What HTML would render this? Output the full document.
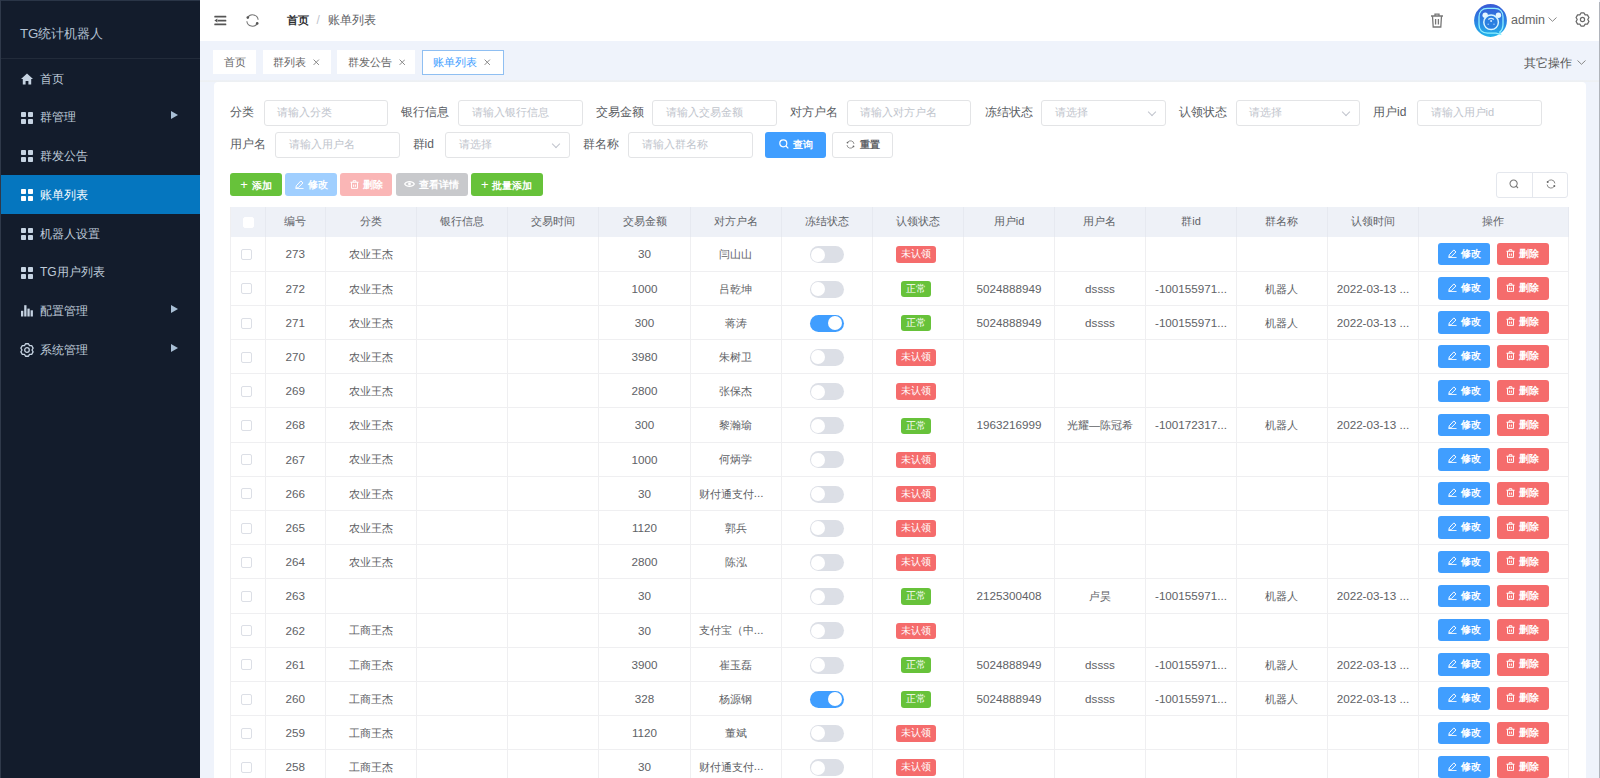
<!DOCTYPE html>
<html><head><meta charset="utf-8">
<style>
*{box-sizing:border-box;margin:0;padding:0}
html,body{width:1600px;height:778px;overflow:hidden}
body{position:relative;background:#eff3fb;font-family:"Liberation Sans",sans-serif;color:#606266;font-size:11.67px}
.abs{position:absolute}
/* sidebar */
#side{position:absolute;left:0;top:0;width:199.6px;height:778px;background:#131c2c}
#logo{position:absolute;left:20px;top:24.5px;font-size:13.3px;color:#b4c2d3;white-space:nowrap;line-height:18px}
#sep{position:absolute;left:0;top:58px;width:200px;height:1px;background:#222b3a}
.mi{position:absolute;left:0;width:200px;height:38.75px;color:#bfcbd9;font-size:12px;line-height:41.5px;font-weight:500}
.mi .ic{position:absolute;left:21px;top:14.2px;width:12px;height:12px}
.mi .tx{position:absolute;left:40px;top:0}
.mi .ar{position:absolute;left:171px;top:13.6px;width:0;height:0;border-top:4.5px solid transparent;border-bottom:4.5px solid transparent;border-left:7.5px solid #a9bfd6}
.mi.act{background:#0576bf;color:#fff}
/* header */
#hdr{position:absolute;left:200px;top:0;width:1399px;height:41.2px;background:#fff}
#rline{position:absolute;left:1599px;top:2px;width:1px;height:776px;background:#b0b4bb}
/* tabs */
.tab{position:absolute;top:50px;height:24px;background:#fff;font-size:11px;line-height:24px;color:#666;white-space:nowrap}
.tab .x{margin-left:7px;margin-top:-1px}
.tab.act{border:1px solid #8fbff2;color:#409eff;line-height:23px;top:49.6px;height:25px}
/* card */
#card{position:absolute;left:213.5px;top:82.3px;width:1372.5px;height:720px;background:#fff;border-radius:4px}
.lbl{position:absolute;font-weight:500;color:#5a5d63;font-size:12px;line-height:13px;white-space:nowrap}
.inp{position:absolute;height:26px;width:124.5px;border:1px solid #e3e4e6;border-radius:3px;font-size:11px;color:#c0c4cc;line-height:23px;padding-left:12.5px;white-space:nowrap;background:#fff}
.inp .chev{position:absolute;right:10px;top:8px;width:6px;height:6px;border-right:1px solid #c0c4cc;border-bottom:1px solid #c0c4cc;transform:rotate(45deg)}
.btn{position:absolute;height:23px;border-radius:3px;color:#fff;font-size:10px;line-height:23px;text-align:center;white-space:nowrap;font-weight:bold}
/* table */
#tbl{position:absolute;left:230px;top:207px;width:1338px;border-collapse:collapse;table-layout:fixed}
#tbl th{height:30px;background:#eef1f7;color:#5f6368;font-weight:500;font-size:11px;border-right:1px solid #e6e9f0;text-align:center;padding:0 0 1.5px 0}
#tbl td{height:34.2px;border-bottom:1px solid #efeff1;border-right:1px solid #efeff1;text-align:center;padding:1.5px 0 0 0;font-size:11px;color:#606266;white-space:nowrap;overflow:hidden}
.L{font-size:11.67px;position:relative;top:-0.8px}
#tbl td.l{text-align:left;padding-left:8px;text-overflow:ellipsis}
#tbl td:first-child,#tbl th:first-child{border-left:1px solid #efeff1}
.cb{display:inline-block;width:11px;height:11px;border:1px solid #dcdfe6;border-radius:2px;background:#fff;vertical-align:middle;position:relative;left:-2px;top:-1px}
.sw{display:inline-block;position:relative;width:34px;height:17px;border-radius:9px;background:#dcdfe6;vertical-align:middle}
.sw:after{content:"";position:absolute;left:1.5px;top:1.5px;width:14px;height:14px;border-radius:50%;background:#fff}
.sw.on{background:#409eff}
.sw.on:after{left:18.5px}
.tag{display:inline-block;height:16.5px;line-height:16.5px;border-radius:3px;color:#fff;font-size:10px;padding:0 5px;vertical-align:middle;position:relative;left:-1.5px;font-weight:500}
.tg-r{background:#f56c6c}
.tg-g{background:#67c23a}
.ab{display:inline-block;width:52px;height:22.5px;line-height:22.5px;border-radius:3px;color:#fff;font-size:10px;font-weight:bold;vertical-align:middle;position:relative;top:-0.7px}
.ab.e{background:#409eff}
.ab.d{background:#f56c6c;margin-left:6.5px}
svg{display:inline-block;vertical-align:middle}
.ei{margin-right:4px;margin-top:-2px}
</style></head><body>
<div id="side">
  <div id="logo">TG统计机器人</div>
  <div id="sep"></div>
  <div class="mi" style="top:58.70px"><svg class="ic" viewBox="0 0 12 12"><path d="M6 0.5 L0 6 H1.8 V11.5 H4.6 V8 H7.4 V11.5 H10.2 V6 H12 Z" fill="#c6d3e2"/></svg><span class="tx">首页</span></div>
  <div class="mi" style="top:97.45px"><svg class="ic" viewBox="0 0 12 12"><rect x="0" y="0" width="5" height="5" rx="0.8" fill="#c6d3e2"/><rect x="7" y="0" width="5" height="5" rx="0.8" fill="#c6d3e2"/><rect x="0" y="7" width="5" height="5" rx="0.8" fill="#c6d3e2"/><rect x="7" y="7" width="5" height="5" rx="0.8" fill="#c6d3e2"/></svg><span class="tx">群管理</span><span class="ar"></span></div>
  <div class="mi" style="top:136.20px"><svg class="ic" viewBox="0 0 12 12"><rect x="0" y="0" width="5" height="5" rx="0.8" fill="#c6d3e2"/><rect x="7" y="0" width="5" height="5" rx="0.8" fill="#c6d3e2"/><rect x="0" y="7" width="5" height="5" rx="0.8" fill="#c6d3e2"/><rect x="7" y="7" width="5" height="5" rx="0.8" fill="#c6d3e2"/></svg><span class="tx">群发公告</span></div>
  <div class="mi act" style="top:174.95px"><svg class="ic" viewBox="0 0 12 12"><rect x="0" y="0" width="5" height="5" rx="0.8" fill="#fff"/><rect x="7" y="0" width="5" height="5" rx="0.8" fill="#fff"/><rect x="0" y="7" width="5" height="5" rx="0.8" fill="#fff"/><rect x="7" y="7" width="5" height="5" rx="0.8" fill="#fff"/></svg><span class="tx">账单列表</span></div>
  <div class="mi" style="top:213.70px"><svg class="ic" viewBox="0 0 12 12"><rect x="0" y="0" width="5" height="5" rx="0.8" fill="#c6d3e2"/><rect x="7" y="0" width="5" height="5" rx="0.8" fill="#c6d3e2"/><rect x="0" y="7" width="5" height="5" rx="0.8" fill="#c6d3e2"/><rect x="7" y="7" width="5" height="5" rx="0.8" fill="#c6d3e2"/></svg><span class="tx">机器人设置</span></div>
  <div class="mi" style="top:252.45px"><svg class="ic" viewBox="0 0 12 12"><rect x="0" y="0" width="5" height="5" rx="0.8" fill="#c6d3e2"/><rect x="7" y="0" width="5" height="5" rx="0.8" fill="#c6d3e2"/><rect x="0" y="7" width="5" height="5" rx="0.8" fill="#c6d3e2"/><rect x="7" y="7" width="5" height="5" rx="0.8" fill="#c6d3e2"/></svg><span class="tx">TG用户列表</span></div>
  <div class="mi" style="top:291.20px"><svg class="ic" viewBox="0 0 12 12"><rect x="0" y="5.8" width="2.3" height="5.7" fill="#c6d3e2"/><rect x="3.2" y="0.2" width="2.3" height="11.3" fill="#c6d3e2"/><rect x="6.4" y="3.6" width="2.3" height="7.9" fill="#c6d3e2"/><rect x="9.6" y="5.3" width="2.3" height="6.2" fill="#c6d3e2"/></svg><span class="tx">配置管理</span><span class="ar"></span></div>
  <div class="mi" style="top:329.95px"><svg class="ic" viewBox="0 0 14 14" style="left:19.6px;width:14px;height:14px;top:13px"><path d="M5.56 0.76 L8.44 0.76 L9.50 2.67 L11.68 2.64 L13.12 5.13 L12.00 7.00 L13.12 8.87 L11.68 11.36 L9.50 11.33 L8.44 13.24 L5.56 13.24 L4.50 11.33 L2.32 11.36 L0.88 8.87 L2.00 7.00 L0.88 5.13 L2.32 2.64 L4.50 2.67 Z" fill="none" stroke="#c6d3e2" stroke-width="1.3" stroke-linejoin="round"/><circle cx="7" cy="7" r="2.3" fill="none" stroke="#c6d3e2" stroke-width="1.3"/></svg><span class="tx">系统管理</span><span class="ar"></span></div>
</div>

<div class="abs" style="left:0;top:0;width:200px;height:1px;background:#2a3547"></div><div class="abs" style="left:0;top:0;width:1px;height:778px;background:#2f394a"></div>
<div id="hdr">
  <svg class="abs" style="left:14px;top:15px" width="12.5" height="11" viewBox="0 0 12.5 11"><rect x="0.3" y="0.8" width="12" height="1.7" rx="0.5" fill="#555"/><rect x="3.6" y="4.7" width="8.7" height="1.7" rx="0.5" fill="#555"/><path d="M0.4 5.55 L3.4 3.6 V7.5 Z" fill="#555"/><rect x="0.3" y="8.6" width="12" height="1.7" rx="0.5" fill="#555"/></svg>
  <svg class="abs" style="left:46.3px;top:13.9px" width="13" height="13" viewBox="0 0 13 13"><path d="M1.6 3.6 A5.7 5.7 0 0 1 12.15 5.8" fill="none" stroke="#777" stroke-width="1.1"/><path d="M0.85 7.2 A5.7 5.7 0 0 0 11.4 9.4" fill="none" stroke="#777" stroke-width="1.1"/><circle cx="1.8" cy="3.6" r="1.3" fill="#555"/><circle cx="11.2" cy="9.4" r="1.3" fill="#555"/></svg>
  <div class="abs" style="left:86.5px;top:11.8px;font-size:12px;line-height:16px;white-space:nowrap"><b style="color:#303133;font-size:11px">首页</b><span style="color:#c0c4cc;margin:0 8px">/</span><span style="color:#606266">账单列表</span></div>
  <svg class="abs" style="left:1230px;top:13px" width="14" height="15" viewBox="0 0 14 15"><path d="M1 3 H13 M5 3 V1.2 H9 V3 M2.5 3 L3.2 14 H10.8 L11.5 3 M5.6 6 V11.5 M8.4 6 V11.5" fill="none" stroke="#777" stroke-width="1.3"/></svg>
  <svg class="abs" style="left:1273.6px;top:3.9px" width="33" height="33" viewBox="0 0 33 33"><defs><linearGradient id="av" x1="0" y1="0" x2="0" y2="1"><stop offset="0" stop-color="#3a5ad6"/><stop offset="0.5" stop-color="#2a80e2"/><stop offset="1" stop-color="#22b4ea"/></linearGradient></defs><circle cx="16.5" cy="16.5" r="16.4" fill="url(#av)"/><path d="M13.5 4.3 H20.5 C26 4.3 29 7.5 29 13 V20 C29 24 27.8 26.5 25.8 28 L26.6 30.4 L22 29.2 H13.5 C8 29.2 5 26 5 20.5 V13 C5 7.5 8 4.3 13.5 4.3 Z" fill="none" stroke="#8fefff" stroke-width="1.3"/><circle cx="11.2" cy="11.2" r="2.7" fill="#e6f6ff"/><circle cx="24.4" cy="11.2" r="2.7" fill="#e6f6ff"/><circle cx="17.1" cy="18.3" r="7.3" fill="#2a7fe0" stroke="#d8f4ff" stroke-width="1.5"/><path d="M14.3 15.6 Q17.1 13.2 19.9 15.6" fill="none" stroke="#d0e8ff" stroke-width="1.3"/><circle cx="17.1" cy="17" r="1" fill="#d0e8ff"/><circle cx="14.2" cy="20.3" r="0.8" fill="#9cc8f5"/><circle cx="20" cy="20.3" r="0.8" fill="#9cc8f5"/></svg>
  <div class="abs" style="left:1311px;top:12px;font-size:12.5px;line-height:16px;color:#666">admin</div>
  <svg class="abs" style="left:1347.5px;top:17px" width="9" height="5" viewBox="0 0 9 5"><path d="M0.5 0.5 L4.5 4.3 L8.5 0.5" fill="none" stroke="#888" stroke-width="1"/></svg>
  <svg class="abs" style="left:1375.2px;top:11.8px" width="15" height="15" viewBox="0 0 15 15"><path d="M5.99 0.97 L9.01 0.97 L10.15 2.91 L12.40 2.93 L13.91 5.54 L12.80 7.50 L13.91 9.46 L12.40 12.07 L10.15 12.09 L9.01 14.03 L5.99 14.03 L4.85 12.09 L2.60 12.07 L1.09 9.46 L2.20 7.50 L1.09 5.54 L2.60 2.93 L4.85 2.91 Z" fill="none" stroke="#6a6a6a" stroke-width="1.3" stroke-linejoin="round"/><circle cx="7.5" cy="7.5" r="2.1" fill="none" stroke="#6a6a6a" stroke-width="1.2"/></svg>
</div>
<div id="rline"></div>

<div class="tab" style="left:213px;width:43px;padding-left:10.5px">首页</div>
<div class="tab" style="left:262.5px;width:68px;padding-left:10.5px">群列表<svg class="x" width="6.5" height="6.5" viewBox="0 0 6.5 6.5"><path d="M0.6 0.6 L5.9 5.9 M5.9 0.6 L0.6 5.9" stroke="#888" stroke-width="1"/></svg></div>
<div class="tab" style="left:337px;width:78px;padding-left:10.5px">群发公告<svg class="x" width="6.5" height="6.5" viewBox="0 0 6.5 6.5"><path d="M0.6 0.6 L5.9 5.9 M5.9 0.6 L0.6 5.9" stroke="#888" stroke-width="1"/></svg></div>
<div class="tab act" style="left:422px;width:82px;padding-left:10px">账单列表<svg class="x" width="6.5" height="6.5" viewBox="0 0 6.5 6.5"><path d="M0.6 0.6 L5.9 5.9 M5.9 0.6 L0.6 5.9" stroke="#888" stroke-width="1"/></svg></div>
<div class="abs" style="left:1524px;top:55.5px;font-size:12px;line-height:14px;color:#555;white-space:nowrap">其它操作</div>
<svg class="abs" style="left:1576.5px;top:60px" width="9" height="5" viewBox="0 0 9 5"><path d="M0.5 0.5 L4.5 4.3 L8.5 0.5" fill="none" stroke="#888" stroke-width="1"/></svg>

<div class="abs" style="left:200px;top:79.8px;width:1399px;height:2.5px;background:linear-gradient(#eef1f6,#edf0f2)"></div>
<div id="card"></div>

<!-- form row1 -->
<div class="lbl" style="left:230px;top:106px">分类</div>
<div class="inp" style="left:263.5px;top:100px">请输入分类</div>
<div class="lbl" style="left:401px;top:106px">银行信息</div>
<div class="inp" style="left:458px;top:100px">请输入银行信息</div>
<div class="lbl" style="left:595.5px;top:106px">交易金额</div>
<div class="inp" style="left:652.3px;top:100px">请输入交易金额</div>
<div class="lbl" style="left:790px;top:106px">对方户名</div>
<div class="inp" style="left:846.5px;top:100px">请输入对方户名</div>
<div class="lbl" style="left:984.5px;top:106px">冻结状态</div>
<div class="inp" style="left:1041px;top:100px">请选择<span class="chev"></span></div>
<div class="lbl" style="left:1179px;top:106px">认领状态</div>
<div class="inp" style="left:1235.5px;top:100px">请选择<span class="chev"></span></div>
<div class="lbl" style="left:1373px;top:106px">用户id</div>
<div class="inp" style="left:1417px;top:100px">请输入用户id</div>
<!-- form row2 -->
<div class="lbl" style="left:230px;top:138px">用户名</div>
<div class="inp" style="left:275px;top:132px">请输入用户名</div>
<div class="lbl" style="left:412.5px;top:138px">群id</div>
<div class="inp" style="left:445px;top:132px">请选择<span class="chev"></span></div>
<div class="lbl" style="left:582.5px;top:138px">群名称</div>
<div class="inp" style="left:628px;top:132px">请输入群名称</div>
<div class="btn" style="left:765px;top:132px;width:61px;height:26px;line-height:26px;background:#409eff;border-radius:3px">
  <svg width="10" height="10" viewBox="0 0 10 10" style="margin-right:4px;margin-top:-2px"><circle cx="4.3" cy="4.3" r="3.5" fill="none" stroke="#fff" stroke-width="1.2"/><path d="M7 7 L9.3 9.3" stroke="#fff" stroke-width="1.2"/></svg>查询</div>
<div class="btn" style="left:832px;top:132px;width:61px;height:26px;line-height:24px;background:#fff;border:1px solid #e3e4e6;color:#606266">
  <svg width="9" height="9" viewBox="0 0 10 10" style="margin-right:5px;margin-top:-2px"><path d="M1.6 2.9 A3.9 3.9 0 0 1 8.9 4.4" fill="none" stroke="#888" stroke-width="1"/><path d="M1.1 5.6 A3.9 3.9 0 0 0 8.4 7.1" fill="none" stroke="#888" stroke-width="1"/><circle cx="1.7" cy="2.9" r="1" fill="#666"/><circle cx="8.3" cy="7.1" r="1" fill="#666"/></svg>重置</div>

<!-- toolbar -->
<div class="btn" style="left:230px;top:172.8px;width:52px;background:#67c23a"><span style="font-size:13px;font-weight:normal;margin-right:4px">+</span>添加</div>
<div class="btn" style="left:285.3px;top:172.8px;width:52px;background:#a0cfff">
  <svg width="9" height="9" viewBox="0 0 10 10" style="margin-right:4px;margin-top:-2px"><path d="M6.5 1 L8.8 3.3 L3.5 8.6 L1 9 L1.4 6.5 Z M0.5 9.6 H9.5" fill="none" stroke="#fff" stroke-width="1.1"/></svg>修改</div>
<div class="btn" style="left:340.3px;top:172.8px;width:52px;background:#fab6b6">
  <svg width="9" height="9" viewBox="0 0 10 10" style="margin-right:4px;margin-top:-2px"><path d="M0.5 2.5 H9.5 M3.5 2.5 V0.8 H6.5 V2.5 M1.7 2.5 V9.3 H8.3 V2.5 M4 5 V7.5 M6 5 V7.5" fill="none" stroke="#fff" stroke-width="1.1"/></svg>删除</div>
<div class="btn" style="left:395.5px;top:172.8px;width:72px;background:#c8c9cc">
  <svg width="11" height="8" viewBox="0 0 11 8" style="margin-right:4px;margin-top:-2px"><path d="M0.6 4 C2.5 0.8 8.5 0.8 10.4 4 C8.5 7.2 2.5 7.2 0.6 4 Z" fill="none" stroke="#fff" stroke-width="1.1"/><circle cx="5.5" cy="4" r="1.4" fill="#fff"/></svg>查看详情</div>
<div class="btn" style="left:470.6px;top:172.8px;width:72.2px;background:#67c23a"><span style="font-size:13px;font-weight:normal;margin-right:4px">+</span>批量添加</div>

<div class="abs" style="left:1496.2px;top:171.6px;width:72px;height:26px;border:1px solid #e4e7ed;border-radius:3px;background:#fff"></div>
<div class="abs" style="left:1532px;top:171.6px;width:1px;height:26px;background:#e4e7ed"></div>
<svg class="abs" style="left:1509.3px;top:178.8px" width="10" height="10" viewBox="0 0 10 10"><circle cx="4.6" cy="4.6" r="3.6" fill="none" stroke="#777" stroke-width="1.05"/><path d="M7.2 7.2 L9 9" stroke="#777" stroke-width="1.1"/></svg>
<svg class="abs" style="left:1545.5px;top:178.5px" width="10" height="10" viewBox="0 0 10 10"><path d="M1.6 2.9 A3.9 3.9 0 0 1 8.9 4.4" fill="none" stroke="#888" stroke-width="1"/><path d="M1.1 5.6 A3.9 3.9 0 0 0 8.4 7.1" fill="none" stroke="#888" stroke-width="1"/><circle cx="1.7" cy="2.9" r="1" fill="#666"/><circle cx="8.3" cy="7.1" r="1" fill="#666"/></svg>

<table id="tbl">
<colgroup><col style="width:35px"><col style="width:59.5px"><col style="width:91.3px"><col style="width:91.3px"><col style="width:91.3px"><col style="width:91.3px"><col style="width:91.3px"><col style="width:91.0px"><col style="width:91.0px"><col style="width:91.0px"><col style="width:91.0px"><col style="width:91.0px"><col style="width:91.0px"><col style="width:91.0px"><col style="width:150px"></colgroup>
<thead><tr><th><span class="cb" style="border-color:#fff;left:0;top:0"></span></th><th>编号</th><th>分类</th><th>银行信息</th><th>交易时间</th><th>交易金额</th><th>对方户名</th><th>冻结状态</th><th>认领状态</th><th>用户id</th><th>用户名</th><th>群id</th><th>群名称</th><th>认领时间</th><th>操作</th></tr></thead>
<tbody><tr><td><span class="cb"></span></td><td><span class="L">273</span></td><td>农业王杰</td><td></td><td></td><td><span class="L">30</span></td><td>闫山山</td><td><span class="sw"></span></td><td><span class="tag tg-r">未认领</span></td><td></td><td></td><td></td><td></td><td></td><td><span class="ab e"><svg width="9" height="9" viewBox="0 0 10 10" class="ei"><path d="M6.5 1 L8.8 3.3 L3.5 8.6 L1 9 L1.4 6.5 Z M0.5 9.6 H9.5" fill="none" stroke="#fff" stroke-width="1.1"/></svg>修改</span><span class="ab d"><svg width="9" height="9" viewBox="0 0 10 10" class="ei"><path d="M0.5 2.5 H9.5 M3.5 2.5 V0.8 H6.5 V2.5 M1.7 2.5 V9.3 H8.3 V2.5 M4 5 V7.5 M6 5 V7.5" fill="none" stroke="#fff" stroke-width="1.1"/></svg>删除</span></td></tr>
<tr><td><span class="cb"></span></td><td><span class="L">272</span></td><td>农业王杰</td><td></td><td></td><td><span class="L">1000</span></td><td>吕乾坤</td><td><span class="sw"></span></td><td><span class="tag tg-g">正常</span></td><td><span class="L">5024888949</span></td><td><span class="L">dssss</span></td><td><span class="L">-100155971...</span></td><td>机器人</td><td><span class="L">2022-03-13 ...</span></td><td><span class="ab e"><svg width="9" height="9" viewBox="0 0 10 10" class="ei"><path d="M6.5 1 L8.8 3.3 L3.5 8.6 L1 9 L1.4 6.5 Z M0.5 9.6 H9.5" fill="none" stroke="#fff" stroke-width="1.1"/></svg>修改</span><span class="ab d"><svg width="9" height="9" viewBox="0 0 10 10" class="ei"><path d="M0.5 2.5 H9.5 M3.5 2.5 V0.8 H6.5 V2.5 M1.7 2.5 V9.3 H8.3 V2.5 M4 5 V7.5 M6 5 V7.5" fill="none" stroke="#fff" stroke-width="1.1"/></svg>删除</span></td></tr>
<tr><td><span class="cb"></span></td><td><span class="L">271</span></td><td>农业王杰</td><td></td><td></td><td><span class="L">300</span></td><td>蒋涛</td><td><span class="sw on"></span></td><td><span class="tag tg-g">正常</span></td><td><span class="L">5024888949</span></td><td><span class="L">dssss</span></td><td><span class="L">-100155971...</span></td><td>机器人</td><td><span class="L">2022-03-13 ...</span></td><td><span class="ab e"><svg width="9" height="9" viewBox="0 0 10 10" class="ei"><path d="M6.5 1 L8.8 3.3 L3.5 8.6 L1 9 L1.4 6.5 Z M0.5 9.6 H9.5" fill="none" stroke="#fff" stroke-width="1.1"/></svg>修改</span><span class="ab d"><svg width="9" height="9" viewBox="0 0 10 10" class="ei"><path d="M0.5 2.5 H9.5 M3.5 2.5 V0.8 H6.5 V2.5 M1.7 2.5 V9.3 H8.3 V2.5 M4 5 V7.5 M6 5 V7.5" fill="none" stroke="#fff" stroke-width="1.1"/></svg>删除</span></td></tr>
<tr><td><span class="cb"></span></td><td><span class="L">270</span></td><td>农业王杰</td><td></td><td></td><td><span class="L">3980</span></td><td>朱树卫</td><td><span class="sw"></span></td><td><span class="tag tg-r">未认领</span></td><td></td><td></td><td></td><td></td><td></td><td><span class="ab e"><svg width="9" height="9" viewBox="0 0 10 10" class="ei"><path d="M6.5 1 L8.8 3.3 L3.5 8.6 L1 9 L1.4 6.5 Z M0.5 9.6 H9.5" fill="none" stroke="#fff" stroke-width="1.1"/></svg>修改</span><span class="ab d"><svg width="9" height="9" viewBox="0 0 10 10" class="ei"><path d="M0.5 2.5 H9.5 M3.5 2.5 V0.8 H6.5 V2.5 M1.7 2.5 V9.3 H8.3 V2.5 M4 5 V7.5 M6 5 V7.5" fill="none" stroke="#fff" stroke-width="1.1"/></svg>删除</span></td></tr>
<tr><td><span class="cb"></span></td><td><span class="L">269</span></td><td>农业王杰</td><td></td><td></td><td><span class="L">2800</span></td><td>张保杰</td><td><span class="sw"></span></td><td><span class="tag tg-r">未认领</span></td><td></td><td></td><td></td><td></td><td></td><td><span class="ab e"><svg width="9" height="9" viewBox="0 0 10 10" class="ei"><path d="M6.5 1 L8.8 3.3 L3.5 8.6 L1 9 L1.4 6.5 Z M0.5 9.6 H9.5" fill="none" stroke="#fff" stroke-width="1.1"/></svg>修改</span><span class="ab d"><svg width="9" height="9" viewBox="0 0 10 10" class="ei"><path d="M0.5 2.5 H9.5 M3.5 2.5 V0.8 H6.5 V2.5 M1.7 2.5 V9.3 H8.3 V2.5 M4 5 V7.5 M6 5 V7.5" fill="none" stroke="#fff" stroke-width="1.1"/></svg>删除</span></td></tr>
<tr><td><span class="cb"></span></td><td><span class="L">268</span></td><td>农业王杰</td><td></td><td></td><td><span class="L">300</span></td><td>黎瀚瑜</td><td><span class="sw"></span></td><td><span class="tag tg-g">正常</span></td><td><span class="L">1963216999</span></td><td>光耀—陈冠希</td><td><span class="L">-100172317...</span></td><td>机器人</td><td><span class="L">2022-03-13 ...</span></td><td><span class="ab e"><svg width="9" height="9" viewBox="0 0 10 10" class="ei"><path d="M6.5 1 L8.8 3.3 L3.5 8.6 L1 9 L1.4 6.5 Z M0.5 9.6 H9.5" fill="none" stroke="#fff" stroke-width="1.1"/></svg>修改</span><span class="ab d"><svg width="9" height="9" viewBox="0 0 10 10" class="ei"><path d="M0.5 2.5 H9.5 M3.5 2.5 V0.8 H6.5 V2.5 M1.7 2.5 V9.3 H8.3 V2.5 M4 5 V7.5 M6 5 V7.5" fill="none" stroke="#fff" stroke-width="1.1"/></svg>删除</span></td></tr>
<tr><td><span class="cb"></span></td><td><span class="L">267</span></td><td>农业王杰</td><td></td><td></td><td><span class="L">1000</span></td><td>何炳学</td><td><span class="sw"></span></td><td><span class="tag tg-r">未认领</span></td><td></td><td></td><td></td><td></td><td></td><td><span class="ab e"><svg width="9" height="9" viewBox="0 0 10 10" class="ei"><path d="M6.5 1 L8.8 3.3 L3.5 8.6 L1 9 L1.4 6.5 Z M0.5 9.6 H9.5" fill="none" stroke="#fff" stroke-width="1.1"/></svg>修改</span><span class="ab d"><svg width="9" height="9" viewBox="0 0 10 10" class="ei"><path d="M0.5 2.5 H9.5 M3.5 2.5 V0.8 H6.5 V2.5 M1.7 2.5 V9.3 H8.3 V2.5 M4 5 V7.5 M6 5 V7.5" fill="none" stroke="#fff" stroke-width="1.1"/></svg>删除</span></td></tr>
<tr><td><span class="cb"></span></td><td><span class="L">266</span></td><td>农业王杰</td><td></td><td></td><td><span class="L">30</span></td><td class="l">财付通支付<span class="L">...</span></td><td><span class="sw"></span></td><td><span class="tag tg-r">未认领</span></td><td></td><td></td><td></td><td></td><td></td><td><span class="ab e"><svg width="9" height="9" viewBox="0 0 10 10" class="ei"><path d="M6.5 1 L8.8 3.3 L3.5 8.6 L1 9 L1.4 6.5 Z M0.5 9.6 H9.5" fill="none" stroke="#fff" stroke-width="1.1"/></svg>修改</span><span class="ab d"><svg width="9" height="9" viewBox="0 0 10 10" class="ei"><path d="M0.5 2.5 H9.5 M3.5 2.5 V0.8 H6.5 V2.5 M1.7 2.5 V9.3 H8.3 V2.5 M4 5 V7.5 M6 5 V7.5" fill="none" stroke="#fff" stroke-width="1.1"/></svg>删除</span></td></tr>
<tr><td><span class="cb"></span></td><td><span class="L">265</span></td><td>农业王杰</td><td></td><td></td><td><span class="L">1120</span></td><td>郭兵</td><td><span class="sw"></span></td><td><span class="tag tg-r">未认领</span></td><td></td><td></td><td></td><td></td><td></td><td><span class="ab e"><svg width="9" height="9" viewBox="0 0 10 10" class="ei"><path d="M6.5 1 L8.8 3.3 L3.5 8.6 L1 9 L1.4 6.5 Z M0.5 9.6 H9.5" fill="none" stroke="#fff" stroke-width="1.1"/></svg>修改</span><span class="ab d"><svg width="9" height="9" viewBox="0 0 10 10" class="ei"><path d="M0.5 2.5 H9.5 M3.5 2.5 V0.8 H6.5 V2.5 M1.7 2.5 V9.3 H8.3 V2.5 M4 5 V7.5 M6 5 V7.5" fill="none" stroke="#fff" stroke-width="1.1"/></svg>删除</span></td></tr>
<tr><td><span class="cb"></span></td><td><span class="L">264</span></td><td>农业王杰</td><td></td><td></td><td><span class="L">2800</span></td><td>陈泓</td><td><span class="sw"></span></td><td><span class="tag tg-r">未认领</span></td><td></td><td></td><td></td><td></td><td></td><td><span class="ab e"><svg width="9" height="9" viewBox="0 0 10 10" class="ei"><path d="M6.5 1 L8.8 3.3 L3.5 8.6 L1 9 L1.4 6.5 Z M0.5 9.6 H9.5" fill="none" stroke="#fff" stroke-width="1.1"/></svg>修改</span><span class="ab d"><svg width="9" height="9" viewBox="0 0 10 10" class="ei"><path d="M0.5 2.5 H9.5 M3.5 2.5 V0.8 H6.5 V2.5 M1.7 2.5 V9.3 H8.3 V2.5 M4 5 V7.5 M6 5 V7.5" fill="none" stroke="#fff" stroke-width="1.1"/></svg>删除</span></td></tr>
<tr><td><span class="cb"></span></td><td><span class="L">263</span></td><td></td><td></td><td></td><td><span class="L">30</span></td><td></td><td><span class="sw"></span></td><td><span class="tag tg-g">正常</span></td><td><span class="L">2125300408</span></td><td>卢昊</td><td><span class="L">-100155971...</span></td><td>机器人</td><td><span class="L">2022-03-13 ...</span></td><td><span class="ab e"><svg width="9" height="9" viewBox="0 0 10 10" class="ei"><path d="M6.5 1 L8.8 3.3 L3.5 8.6 L1 9 L1.4 6.5 Z M0.5 9.6 H9.5" fill="none" stroke="#fff" stroke-width="1.1"/></svg>修改</span><span class="ab d"><svg width="9" height="9" viewBox="0 0 10 10" class="ei"><path d="M0.5 2.5 H9.5 M3.5 2.5 V0.8 H6.5 V2.5 M1.7 2.5 V9.3 H8.3 V2.5 M4 5 V7.5 M6 5 V7.5" fill="none" stroke="#fff" stroke-width="1.1"/></svg>删除</span></td></tr>
<tr><td><span class="cb"></span></td><td><span class="L">262</span></td><td>工商王杰</td><td></td><td></td><td><span class="L">30</span></td><td class="l">支付宝（中<span class="L">...</span></td><td><span class="sw"></span></td><td><span class="tag tg-r">未认领</span></td><td></td><td></td><td></td><td></td><td></td><td><span class="ab e"><svg width="9" height="9" viewBox="0 0 10 10" class="ei"><path d="M6.5 1 L8.8 3.3 L3.5 8.6 L1 9 L1.4 6.5 Z M0.5 9.6 H9.5" fill="none" stroke="#fff" stroke-width="1.1"/></svg>修改</span><span class="ab d"><svg width="9" height="9" viewBox="0 0 10 10" class="ei"><path d="M0.5 2.5 H9.5 M3.5 2.5 V0.8 H6.5 V2.5 M1.7 2.5 V9.3 H8.3 V2.5 M4 5 V7.5 M6 5 V7.5" fill="none" stroke="#fff" stroke-width="1.1"/></svg>删除</span></td></tr>
<tr><td><span class="cb"></span></td><td><span class="L">261</span></td><td>工商王杰</td><td></td><td></td><td><span class="L">3900</span></td><td>崔玉磊</td><td><span class="sw"></span></td><td><span class="tag tg-g">正常</span></td><td><span class="L">5024888949</span></td><td><span class="L">dssss</span></td><td><span class="L">-100155971...</span></td><td>机器人</td><td><span class="L">2022-03-13 ...</span></td><td><span class="ab e"><svg width="9" height="9" viewBox="0 0 10 10" class="ei"><path d="M6.5 1 L8.8 3.3 L3.5 8.6 L1 9 L1.4 6.5 Z M0.5 9.6 H9.5" fill="none" stroke="#fff" stroke-width="1.1"/></svg>修改</span><span class="ab d"><svg width="9" height="9" viewBox="0 0 10 10" class="ei"><path d="M0.5 2.5 H9.5 M3.5 2.5 V0.8 H6.5 V2.5 M1.7 2.5 V9.3 H8.3 V2.5 M4 5 V7.5 M6 5 V7.5" fill="none" stroke="#fff" stroke-width="1.1"/></svg>删除</span></td></tr>
<tr><td><span class="cb"></span></td><td><span class="L">260</span></td><td>工商王杰</td><td></td><td></td><td><span class="L">328</span></td><td>杨源钢</td><td><span class="sw on"></span></td><td><span class="tag tg-g">正常</span></td><td><span class="L">5024888949</span></td><td><span class="L">dssss</span></td><td><span class="L">-100155971...</span></td><td>机器人</td><td><span class="L">2022-03-13 ...</span></td><td><span class="ab e"><svg width="9" height="9" viewBox="0 0 10 10" class="ei"><path d="M6.5 1 L8.8 3.3 L3.5 8.6 L1 9 L1.4 6.5 Z M0.5 9.6 H9.5" fill="none" stroke="#fff" stroke-width="1.1"/></svg>修改</span><span class="ab d"><svg width="9" height="9" viewBox="0 0 10 10" class="ei"><path d="M0.5 2.5 H9.5 M3.5 2.5 V0.8 H6.5 V2.5 M1.7 2.5 V9.3 H8.3 V2.5 M4 5 V7.5 M6 5 V7.5" fill="none" stroke="#fff" stroke-width="1.1"/></svg>删除</span></td></tr>
<tr><td><span class="cb"></span></td><td><span class="L">259</span></td><td>工商王杰</td><td></td><td></td><td><span class="L">1120</span></td><td>董斌</td><td><span class="sw"></span></td><td><span class="tag tg-r">未认领</span></td><td></td><td></td><td></td><td></td><td></td><td><span class="ab e"><svg width="9" height="9" viewBox="0 0 10 10" class="ei"><path d="M6.5 1 L8.8 3.3 L3.5 8.6 L1 9 L1.4 6.5 Z M0.5 9.6 H9.5" fill="none" stroke="#fff" stroke-width="1.1"/></svg>修改</span><span class="ab d"><svg width="9" height="9" viewBox="0 0 10 10" class="ei"><path d="M0.5 2.5 H9.5 M3.5 2.5 V0.8 H6.5 V2.5 M1.7 2.5 V9.3 H8.3 V2.5 M4 5 V7.5 M6 5 V7.5" fill="none" stroke="#fff" stroke-width="1.1"/></svg>删除</span></td></tr>
<tr><td><span class="cb"></span></td><td><span class="L">258</span></td><td>工商王杰</td><td></td><td></td><td><span class="L">30</span></td><td class="l">财付通支付<span class="L">...</span></td><td><span class="sw"></span></td><td><span class="tag tg-r">未认领</span></td><td></td><td></td><td></td><td></td><td></td><td><span class="ab e"><svg width="9" height="9" viewBox="0 0 10 10" class="ei"><path d="M6.5 1 L8.8 3.3 L3.5 8.6 L1 9 L1.4 6.5 Z M0.5 9.6 H9.5" fill="none" stroke="#fff" stroke-width="1.1"/></svg>修改</span><span class="ab d"><svg width="9" height="9" viewBox="0 0 10 10" class="ei"><path d="M0.5 2.5 H9.5 M3.5 2.5 V0.8 H6.5 V2.5 M1.7 2.5 V9.3 H8.3 V2.5 M4 5 V7.5 M6 5 V7.5" fill="none" stroke="#fff" stroke-width="1.1"/></svg>删除</span></td></tr></tbody>
</table>

</body></html>
